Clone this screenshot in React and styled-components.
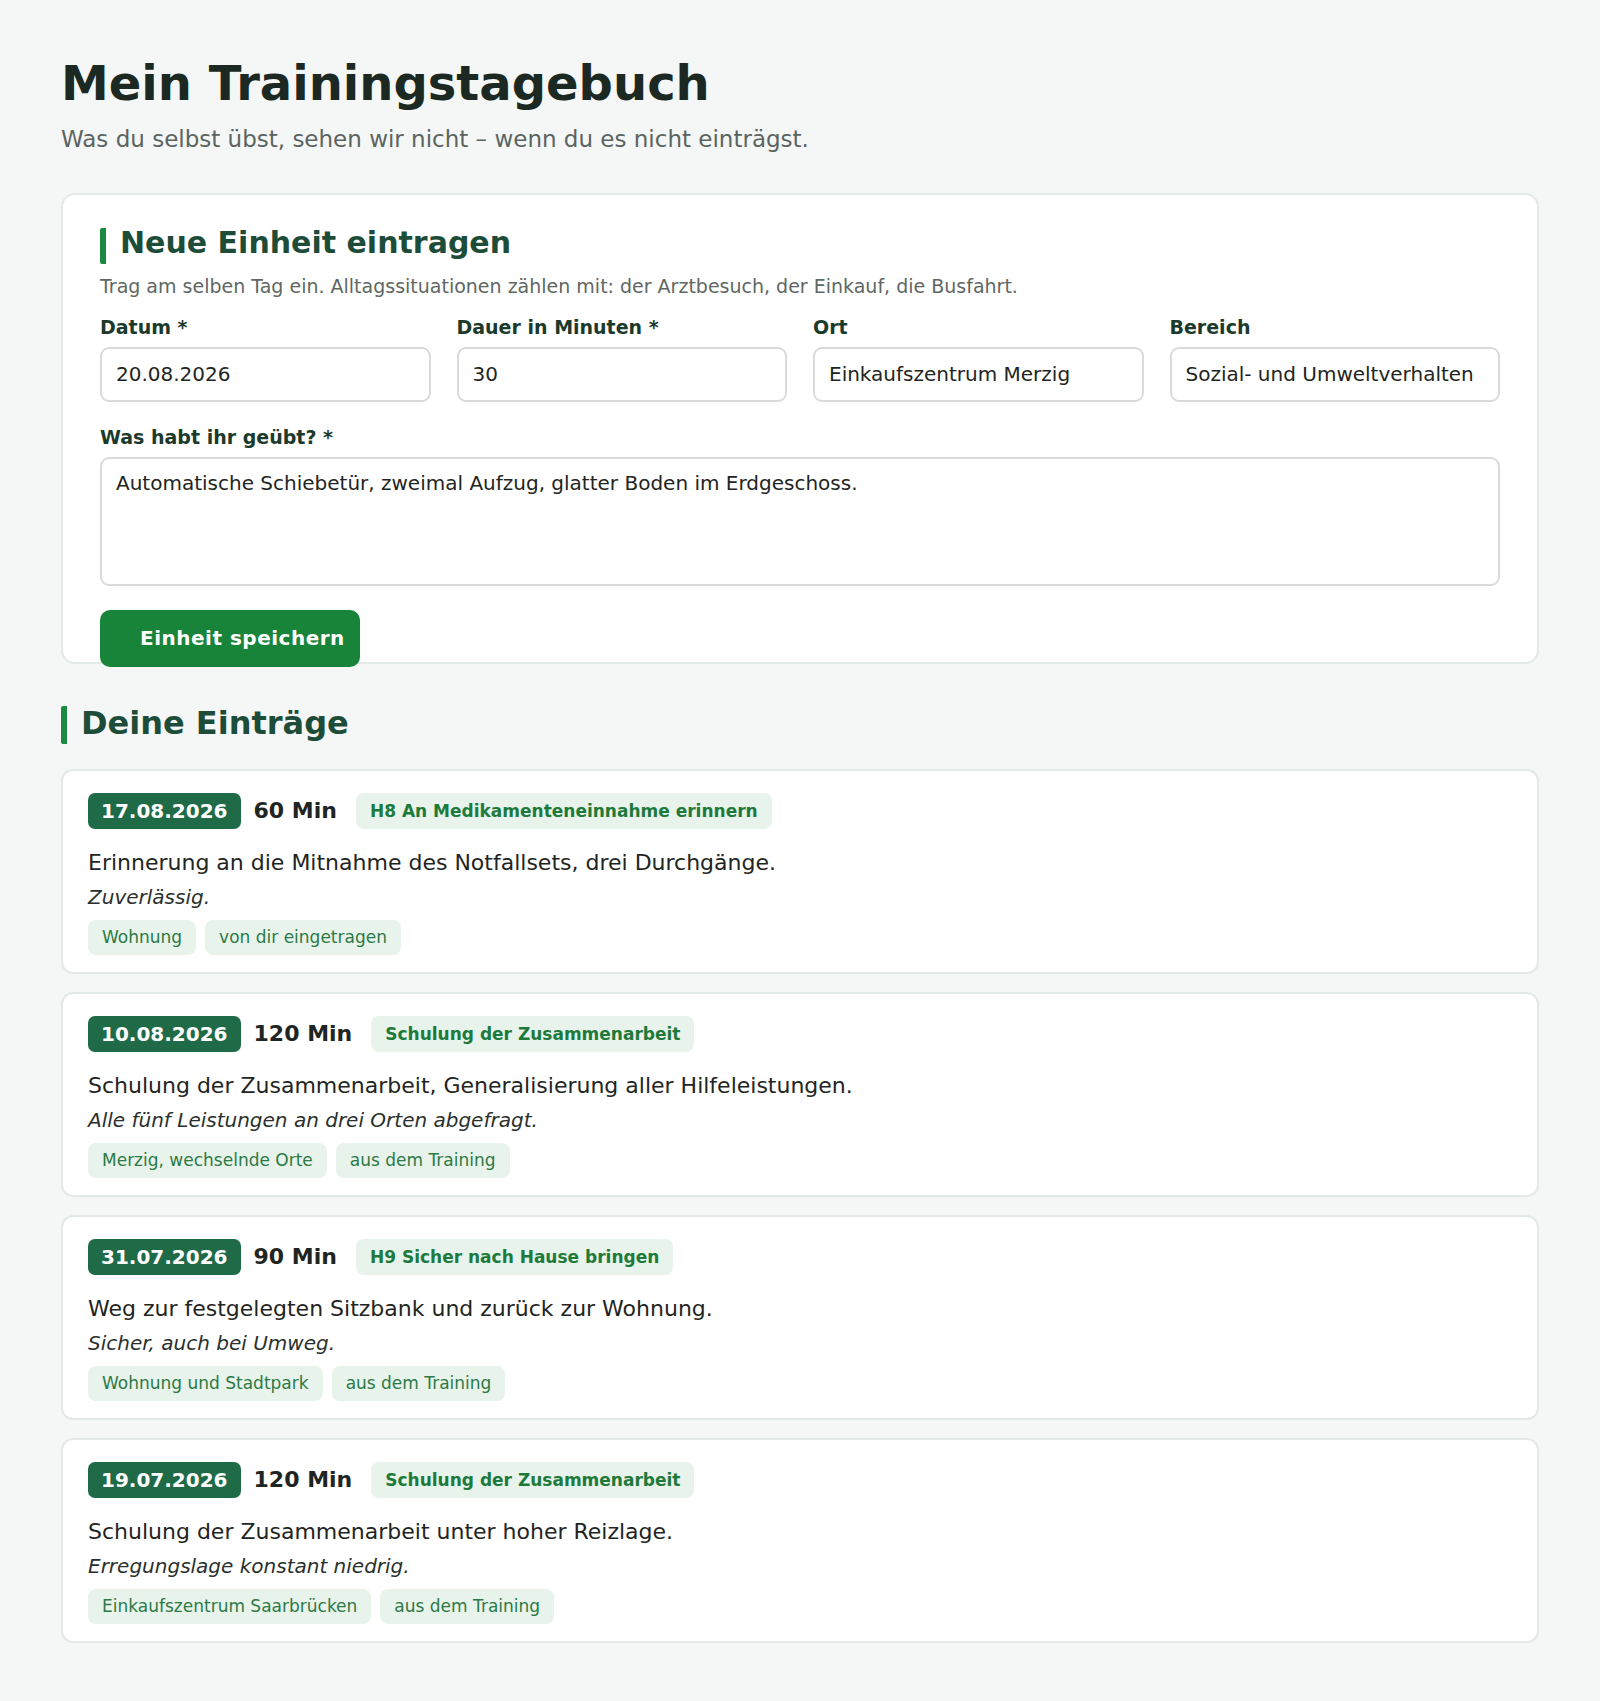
import React from "react";
import styled, { createGlobalStyle } from "styled-components";

const entries = [
  {
    date: "17.08.2026",
    minutes: 60,
    topic: "H8 An Medikamenteneinnahme erinnern",
    text: "Erinnerung an die Mitnahme des Notfallsets, drei Durchgänge.",
    note: "Zuverlässig.",
    tags: ["Wohnung", "von dir eingetragen"],
  },
  {
    date: "10.08.2026",
    minutes: 120,
    topic: "Schulung der Zusammenarbeit",
    text: "Schulung der Zusammenarbeit, Generalisierung aller Hilfeleistungen.",
    note: "Alle fünf Leistungen an drei Orten abgefragt.",
    tags: ["Merzig, wechselnde Orte", "aus dem Training"],
  },
  {
    date: "31.07.2026",
    minutes: 90,
    topic: "H9 Sicher nach Hause bringen",
    text: "Weg zur festgelegten Sitzbank und zurück zur Wohnung.",
    note: "Sicher, auch bei Umweg.",
    tags: ["Wohnung und Stadtpark", "aus dem Training"],
  },
  {
    date: "19.07.2026",
    minutes: 120,
    topic: "Schulung der Zusammenarbeit",
    text: "Schulung der Zusammenarbeit unter hoher Reizlage.",
    note: "Erregungslage konstant niedrig.",
    tags: ["Einkaufszentrum Saarbrücken", "aus dem Training"],
  },
];

const App = () => {
  return (
    <>
      <GlobalStyle />
      <Page>
        <Title>Mein Trainingstagebuch</Title>
        <Lead>Was du selbst übst, sehen wir nicht – wenn du es nicht einträgst.</Lead>

        <FormCard>
          <SectionTitle size={30}>Neue Einheit eintragen</SectionTitle>
          <Hint>
            Trag am selben Tag ein. Alltagssituationen zählen mit: der Arztbesuch, der Einkauf, die Busfahrt.
          </Hint>
          <FieldGrid>
            <Field>
              <Label>Datum *</Label>
              <Input defaultValue="20.08.2026" />
            </Field>
            <Field>
              <Label>Dauer in Minuten *</Label>
              <Input defaultValue="30" />
            </Field>
            <Field>
              <Label>Ort</Label>
              <Input defaultValue="Einkaufszentrum Merzig" />
            </Field>
            <Field>
              <Label>Bereich</Label>
              <Input defaultValue="Sozial- und Umweltverhalten" />
            </Field>
          </FieldGrid>
          <Field wide>
            <Label>Was habt ihr geübt? *</Label>
            <TextArea defaultValue="Automatische Schiebetür, zweimal Aufzug, glatter Boden im Erdgeschoss." />
          </Field>
          <SaveButton>Einheit speichern</SaveButton>
        </FormCard>

        <ListTitle size={32}>Deine Einträge</ListTitle>
        <EntryList>
          {entries.map((e) => (
            <EntryCard key={e.date}>
              <Meta>
                <DateBadge>{e.date}</DateBadge>
                <Duration>{e.minutes} Min</Duration>
                <Topic>{e.topic}</Topic>
              </Meta>
              <EntryText>{e.text}</EntryText>
              <EntryNote>{e.note}</EntryNote>
              <Tags>
                {e.tags.map((t) => (
                  <Tag key={t}>{t}</Tag>
                ))}
              </Tags>
            </EntryCard>
          ))}
        </EntryList>
      </Page>
    </>
  );
};

export default App;

const GlobalStyle = createGlobalStyle`
  * { box-sizing: border-box; }
  body {
    margin: 0;
    background: #f5f7f6;
    font-family: "DejaVu Sans", Verdana, sans-serif;
    color: #1f2522;
  }
`;

const Page = styled.main`
  max-width: 1478px;
  margin: 0 auto;
  padding: 55px 0 59px;
`;

const Title = styled.h1`
  margin: 0;
  font-size: 48px;
  line-height: 1.2;
  font-weight: 700;
  color: #1c2923;
`;

const Lead = styled.p`
  margin: 9px 0 0;
  font-size: 23px;
  line-height: 1.5;
  color: #5b6461;
`;

const FormCard = styled.section`
  margin-top: 37px;
  background: #fff;
  border: 2px solid #e3e9e6;
  border-radius: 14px;
  padding: 33px 37px 0;
`;

const SectionTitle = styled.h2`
  margin: 0;
  font-size: ${({ size }) => size}px;
  line-height: 30px;
  padding: 0 0 6px 14px;
  border-left: 6px solid #1c8a3e;
  border-radius: 2px;
  font-weight: 700;
  color: #1d4c39;
`;

const ListTitle = styled(SectionTitle)`
  margin-top: 42px;
  line-height: 34px;
  padding: 0 0 4px 14px;
`;

const Hint = styled.p`
  margin: 8px 0 0;
  font-size: 19px;
  line-height: 1.5;
  color: #5f6763;
`;

const FieldGrid = styled.div`
  display: grid;
  grid-template-columns: repeat(4, 1fr);
  gap: 26px;
  margin-top: 14px;
`;

const Field = styled.label`
  display: flex;
  flex-direction: column;
  gap: 7px;
  margin-top: ${({ wide }) => (wide ? "23px" : "0")};
`;

const Label = styled.span`
  font-size: 19px;
  line-height: 25px;
  font-weight: 700;
  color: #1b3a2b;
`;

const Input = styled.input`
  height: 55px;
  width: 100%;
  padding: 0 14px;
  border: 2px solid #dadada;
  border-radius: 9px;
  background: #fff;
  font-family: inherit;
  font-size: 20px;
  color: #1f2522;
  outline: none;
`;

const TextArea = styled.textarea`
  height: 129px;
  width: 100%;
  padding: 12px 14px;
  border: 2px solid #dadada;
  border-radius: 9px;
  font-family: inherit;
  font-size: 20px;
  line-height: 1.2;
  color: #1f2522;
  resize: none;
  outline: none;
`;

const SaveButton = styled.button`
  display: block;
  margin: 24px 0 -5px;
  height: 57px;
  padding: 0 15px 0 40px;
  border: none;
  border-radius: 10px;
  background: #17843a;
  color: #fff;
  font-family: inherit;
  font-size: 20px;
  font-weight: 700;
  letter-spacing: 0.5px;
  cursor: pointer;
`;

const EntryList = styled.div`
  display: flex;
  flex-direction: column;
  gap: 18px;
  margin-top: 25px;
`;

const EntryCard = styled.article`
  background: #fff;
  border: 2px solid #e3e9e6;
  border-radius: 12px;
  padding: 22px 25px 17px;
`;

const Meta = styled.div`
  display: flex;
  align-items: center;
  gap: 13px;
  height: 36px;
`;

const DateBadge = styled.span`
  display: inline-flex;
  align-items: center;
  height: 36px;
  padding: 0 13px;
  border-radius: 7px;
  background: #1f6b48;
  color: #fff;
  font-size: 20px;
  font-weight: 700;
`;

const Duration = styled.span`
  margin-right: 6px;
  font-size: 22px;
  font-weight: 700;
  color: #1f2522;
`;

const Topic = styled.span`
  display: inline-flex;
  align-items: center;
  height: 36px;
  padding: 0 14px;
  border-radius: 8px;
  background: #e7f3eb;
  color: #1e7a3b;
  font-size: 17px;
  font-weight: 700;
`;

const EntryText = styled.p`
  margin: 17px 0 0;
  font-size: 22px;
  line-height: 33px;
  color: #1f2522;
`;

const EntryNote = styled.p`
  margin: 3px 0 0;
  font-size: 20px;
  line-height: 30px;
  font-style: italic;
  color: #2a302d;
`;

const Tags = styled.div`
  display: flex;
  gap: 9px;
  margin-top: 8px;
`;

const Tag = styled.span`
  display: inline-flex;
  align-items: center;
  height: 35px;
  padding: 0 14px;
  border-radius: 8px;
  background: #e8f3ec;
  color: #2c7a46;
  font-size: 17px;
`;
